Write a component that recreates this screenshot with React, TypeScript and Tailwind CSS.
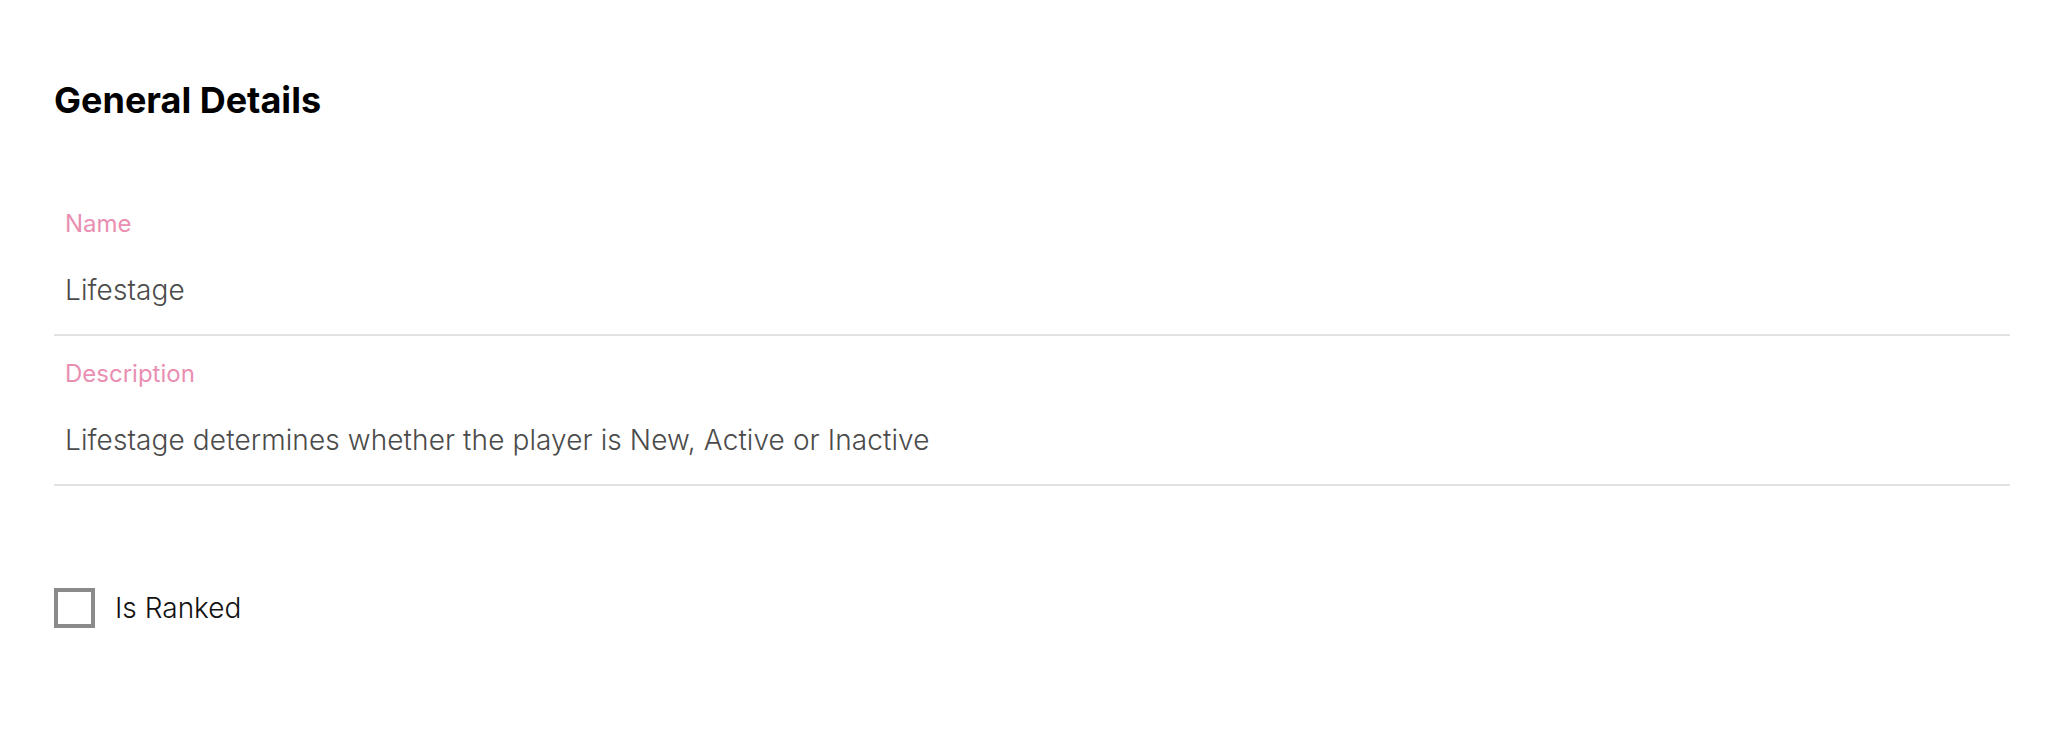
import React from "react";

function Field({ label, value }: { label: string; value: string }) {
  return (
    <div className="flex flex-col pt-[24px] pb-[26px] border-b-2 border-[#e2e2e2]">
      <div className="pl-[11px] text-[24px] leading-[28px] text-[#e98fb2] font-normal">{label}</div>
      <div className="pl-[11px] mt-[34px] text-[28px] leading-[36px] tracking-[0.1px] text-[#4b4b4b] font-light">{value}</div>
    </div>
  );
}

export default function App() {
  return (
    <div
      className="w-full min-h-[736px] bg-white pl-[54px] pr-[42px] pt-[78px]"
      style={{ fontFamily: "Inter, 'Noto Sans', sans-serif" }}
    >
      <h1 className="text-[36px] leading-[44px] font-bold text-black">General Details</h1>
      <div className="mt-[64px] flex flex-col">
        <Field label="Name" value="Lifestage" />
        <Field label="Description" value="Lifestage determines whether the player is New, Active or Inactive" />
      </div>
      <label className="mt-[102px] flex items-center gap-[20px]">
        <span className="w-[41px] h-[40px] border-[4px] border-[#8a8a8a] bg-white"></span>
        <span className="text-[28px] leading-[36px] font-light text-[#111]">Is Ranked</span>
      </label>
    </div>
  );
}
